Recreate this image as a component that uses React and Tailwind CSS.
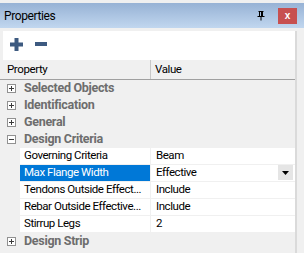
import React from "react";

const font = { fontFamily: 'Roboto, "Liberation Sans", sans-serif' };

function Box({ minus }) {
  return (
    <div className="w-[9px] h-[9px] border border-[#919191] bg-white flex items-center justify-center relative shrink-0">
      <div className="w-[5px] h-px bg-[#3b3b3b]" />
      {!minus && <div className="absolute w-px h-[5px] bg-[#3b3b3b]" />}
    </div>
  );
}

function Category({ label, minus }) {
  return (
    <div className="h-[16px] flex items-center bg-[#f0f0f0]">
      <div className="w-[24px] pl-[7px] flex items-center">
        <Box minus={minus} />
      </div>
      <span className="text-[12.5px] font-bold text-[#6d6d6d] leading-none tracking-[-0.3px]">{label}</span>
    </div>
  );
}

function Row({ name, value, selected, dropdown }) {
  return (
    <div className="h-[16px] flex">
      <div className="w-[20px] bg-[#f0f0f0]" />
      <div
        className={
          "w-[130px] flex items-center pl-[4px] text-[11.5px] leading-none whitespace-nowrap overflow-hidden tracking-[-0.45px] " +
          (selected ? "bg-[#0078d7] text-white" : "bg-white text-black")
        }
      >
        {name}
      </div>
      <div className="w-px bg-[#f0f0f0]" />
      <div className="flex-1 bg-white flex items-center pl-[5px] text-[11.5px] leading-none text-black relative tracking-[-0.45px]">
        {value}
        {dropdown && (
          <div className="absolute right-[2px] top-0 w-[15px] h-[15px] bg-[#e5e5e5] flex items-center justify-center">
            <svg width="7" height="4" viewBox="0 0 7 4">
              <path d="M0 0h7L3.5 4z" fill="#000" />
            </svg>
          </div>
        )}
      </div>
    </div>
  );
}

export default function App() {
  return (
    <div className="w-[304px] h-[253px] bg-[#f0f0f0] overflow-hidden flex flex-col" style={font}>
      <div className="h-[3px] bg-[#f0f0f0]" />
      <div className="h-[25px] bg-gradient-to-b from-[#97b2d5] to-[#c1d7ef] flex items-center pl-[4px] pr-[7px]">
        <span className="text-[12px] text-black flex-1 tracking-[-0.4px]">Properties</span>
        <svg width="8" height="10" viewBox="0 0 8 10" className="mr-[13px]">
          <path d="M1.5 0.5h5M2.5 0.5v5M5.5 0.5v5M0.5 5.5h7M4 5.5v4" stroke="#000" strokeWidth="1" fill="none" />
          <rect x="4" y="1" width="1.5" height="4.5" fill="#000" />
        </svg>
        <div className="w-[19px] h-[16px] bg-[#c75050] flex items-center justify-center">
          <span className="text-white text-[10px] font-bold leading-none" style={{ fontFamily: '"Liberation Sans", sans-serif' }}>x</span>
        </div>
      </div>
      <div className="h-[3px] bg-[#f0f0f0]" />
      <div className="flex-1 flex pl-0 pr-[7px]">
        <div className="flex-1 flex flex-col">
          <div className="h-[29px] bg-white ml-[3px] flex items-center gap-[12px] pl-[7px] pb-[3px]">
            <svg width="13" height="13" viewBox="0 0 13 13">
              <rect x="4.5" y="0" width="4" height="13" fill="#3d5a80" />
              <rect x="0" y="4.5" width="13" height="4" fill="#3d5a80" />
            </svg>
            <svg width="12" height="13" viewBox="0 0 12 13">
              <rect x="0" y="4" width="12" height="4" fill="#3d5a80" />
            </svg>
          </div>
          <div className="h-[20px] flex bg-[#f0f0f0] border-b border-[#a0a0a0] text-[11.5px] text-black tracking-[-0.4px]">
            <div className="w-[151px] flex items-center pl-[7px] border-r border-[#c8c8c8]">Property</div>
            <div className="flex-1 flex items-center pl-[4px]">Value</div>
          </div>
          <div className="flex flex-col gap-px bg-[#f0f0f0] pt-0">
            <Category label="Selected Objects" />
            <Category label="Identification" />
            <Category label="General" />
            <Category label="Design Criteria" minus />
            <Row name="Governing Criteria" value="Beam" />
            <Row name="Max Flange Width" value="Effective" selected dropdown />
            <Row name="Tendons Outside Effect..." value="Include" />
            <Row name="Rebar Outside Effective..." value="Include" />
            <Row name="Stirrup Legs" value="2" />
            <Category label="Design Strip" />
          </div>
        </div>
        <div className="w-[2px] bg-[#dadada]" />
      </div>
    </div>
  );
}
